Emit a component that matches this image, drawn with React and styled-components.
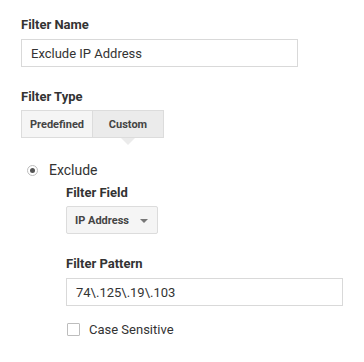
import React from "react";
import styled, { createGlobalStyle } from "styled-components";

const Global = createGlobalStyle`
    body {
        margin: 0;
        background: #fff;
        font-family: Roboto, "Liberation Sans", Arial, sans-serif;
        color: #333;
    }
`;

const Page = styled.div`
    padding: 17px 21px 0 21px;
    width: 364px;
    box-sizing: border-box;
`;

const Label = styled.div`
    font-size: 13px;
    font-weight: 700;
    line-height: 16px;
    color: #333;
    margin-top: ${p => p.$top || 0}px;
`;

const TextInput = styled.div`
    box-sizing: border-box;
    width: ${p => p.$width}px;
    height: 28px;
    margin-top: 6px;
    border: 1px solid #d9d9d9;
    padding: 0 9px;
    display: flex;
    align-items: center;
    font-size: 13px;
    color: #333;
`;

const Tabs = styled.div`
    display: flex;
    margin-top: 5px;
`;

const Tab = styled.div`
    position: relative;
    box-sizing: border-box;
    height: 28px;
    width: ${p => p.$width}px;
    display: flex;
    align-items: center;
    justify-content: center;
    font-size: 11px;
    font-weight: 700;
    color: #444;
    background: ${p => (p.$active ? "#ebebeb" : "#f5f5f5")};
    border: 1px solid #dcdcdc;
    border-left-width: ${p => (p.$first ? 1 : 0)}px;

    &::after {
        content: "";
        display: ${p => (p.$active ? "block" : "none")};
        position: absolute;
        left: 50%;
        bottom: -8px;
        margin-left: -7px;
        border-left: 7px solid transparent;
        border-right: 7px solid transparent;
        border-top: 7px solid #ebebeb;
    }
`;

const RadioRow = styled.div`
    display: flex;
    align-items: center;
    gap: 11px;
    margin-top: 24px;
    margin-left: 6px;
    font-size: 14px;
    line-height: 16px;
`;

const Radio = styled.span`
    box-sizing: border-box;
    width: 11px;
    height: 11px;
    border-radius: 50%;
    border: 1px solid #bdbdbd;
    display: flex;
    align-items: center;
    justify-content: center;

    &::after {
        content: "";
        width: 5px;
        height: 5px;
        border-radius: 50%;
        background: #555;
    }
`;

const SubSection = styled.div`
    margin-left: 45px;
`;

const Select = styled.div`
    box-sizing: border-box;
    width: 92px;
    height: 28px;
    margin-top: 5px;
    background: #f5f5f5;
    border: 1px solid #dcdcdc;
    border-radius: 2px;
    display: flex;
    align-items: center;
    justify-content: space-between;
    padding: 0 9px 0 8px;
    font-size: 11px;
    font-weight: 700;
    color: #444;
`;

const Caret = styled.span`
    width: 0;
    height: 0;
    margin-top: 2px;
    border-left: 4px solid transparent;
    border-right: 4px solid transparent;
    border-top: 4px solid #777;
`;

const CheckRow = styled.div`
    display: flex;
    align-items: center;
    gap: 9px;
    margin-top: 16px;
    margin-left: 1px;
    font-size: 13px;
`;

const Box = styled.span`
    box-sizing: border-box;
    width: 13px;
    height: 13px;
    border: 1px solid #bdbdbd;
    border-radius: 1px;
`;

export default function App() {
    return (
        <Page>
            <Global />
            <Label>Filter Name</Label>
            <TextInput $width={277}>Exclude IP Address</TextInput>

            <Label $top={22}>Filter Type</Label>
            <Tabs>
                <Tab $first $width={72}>Predefined</Tab>
                <Tab $active $width={71}>Custom</Tab>
            </Tabs>

            <RadioRow>
                <Radio />
                Exclude
            </RadioRow>

            <SubSection>
                <Label $top={7}>Filter Field</Label>
                <Select>
                    IP Address
                    <Caret />
                </Select>

                <Label $top={22}>Filter Pattern</Label>
                <TextInput $width={277}>74\.125\.19\.103</TextInput>

                <CheckRow>
                    <Box />
                    Case Sensitive
                </CheckRow>
            </SubSection>
        </Page>
    );
}
